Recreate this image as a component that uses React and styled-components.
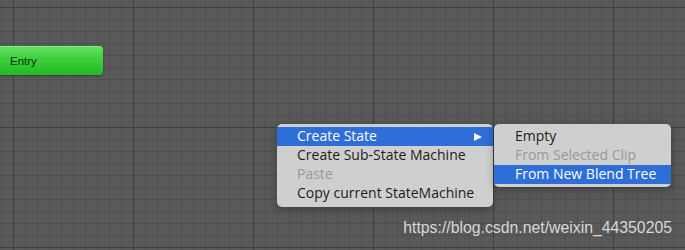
import styled, { createGlobalStyle } from 'styled-components';

const GlobalStyle = createGlobalStyle`
  html, body {
    margin: 0;
    padding: 0;
    background: #585858;
  }
  body {
    font-family: "Liberation Sans", Arial, sans-serif;
  }
`

const mainItems = [
  { label: 'Create State', active: true, sub: true },
  { label: 'Create Sub-State Machine' },
  { label: 'Paste', disabled: true },
  { label: 'Copy current StateMachine' },
];

const subItems = [
  { label: 'Empty' },
  { label: 'From Selected Clip', disabled: true },
  { label: 'From New Blend Tree', active: true },
];

function App() {
  return (
    <>
      <GlobalStyle />
      <Canvas>
        <EntryNode>Entry</EntryNode>
        <Menu>
          {mainItems.map((it) => (
            <Item key={it.label} $active={it.active} $disabled={it.disabled}>
              <span>{it.label}</span>
              {it.sub && <Arrow />}
            </Item>
          ))}
        </Menu>
        <SubMenu>
          {subItems.map((it) => (
            <Item key={it.label} $active={it.active} $disabled={it.disabled} $sub>
              <span>{it.label}</span>
            </Item>
          ))}
        </SubMenu>
        <Watermark>https://blog.csdn.net/weixin_44350205</Watermark>
      </Canvas>
    </>
  );
}

const Canvas = styled.div`
  position: relative;
  width: 685px;
  height: 250px;
  overflow: hidden;
  background-color: #595959;
  background-image:
    linear-gradient(to right, #404040 0 1px, transparent 1px),
    linear-gradient(to bottom, #404040 0 1px, transparent 1px),
    linear-gradient(to right, #4f4f4f 0 1px, transparent 1px),
    linear-gradient(to bottom, #4f4f4f 0 1px, transparent 1px);
  background-size: 120px 120px, 120px 120px, 12px 12px, 12px 12px;
  background-position: 13px 7px, 13px 7px, 1px 7px, 1px 7px;
`

const EntryNode = styled.div`
  position: absolute;
  left: 0;
  top: 46px;
  width: 103px;
  height: 29px;
  box-sizing: border-box;
  padding-left: 10px;
  display: flex;
  align-items: center;
  border-radius: 0 4px 4px 0;
  background: linear-gradient(to bottom, #62e062 0%, #3fd03f 40%, #24b824 100%);
  border-top: 1px solid #86ea86;
  box-shadow: 0 1px 2px rgba(0, 0, 0, 0.35);
  font-size: 11.5px;
  color: #0f2e0f;
`

const Menu = styled.div`
  position: absolute;
  left: 277px;
  top: 124px;
  width: 216px;
  padding: 3px 0 4px;
  background: #cfcfcf;
  border-radius: 5px;
  box-shadow: 0 2px 8px rgba(0, 0, 0, 0.3);
  font-family: "Open Sans", "Liberation Sans", sans-serif;
`

const SubMenu = styled(Menu)`
  left: 494px;
  width: 177px;
  padding: 3px 0 3px;
`

const Item = styled.div`
  height: 19px;
  display: flex;
  align-items: center;
  justify-content: space-between;
  padding: 0 11px 0 ${(p) => (p.$sub ? '21px' : '20px')};
  font-size: 14px;
  line-height: 19px;
  color: ${(p) => (p.$active ? '#ffffff' : p.$disabled ? '#999999' : '#1c1c1c')};
  background: ${(p) => (p.$active ? '#2e6ed8' : 'transparent')};

  span {
    position: relative;
    top: -1px;
  }
`

const Arrow = styled.i`
  width: 0;
  height: 0;
  border-top: 4.5px solid transparent;
  border-bottom: 4.5px solid transparent;
  border-left: 8px solid #ffffff;
`

const Watermark = styled.div`
  position: absolute;
  right: 13px;
  top: 219px;
  font-size: 15.8px;
  color: rgba(240, 240, 240, 0.85);
`

export default App;
